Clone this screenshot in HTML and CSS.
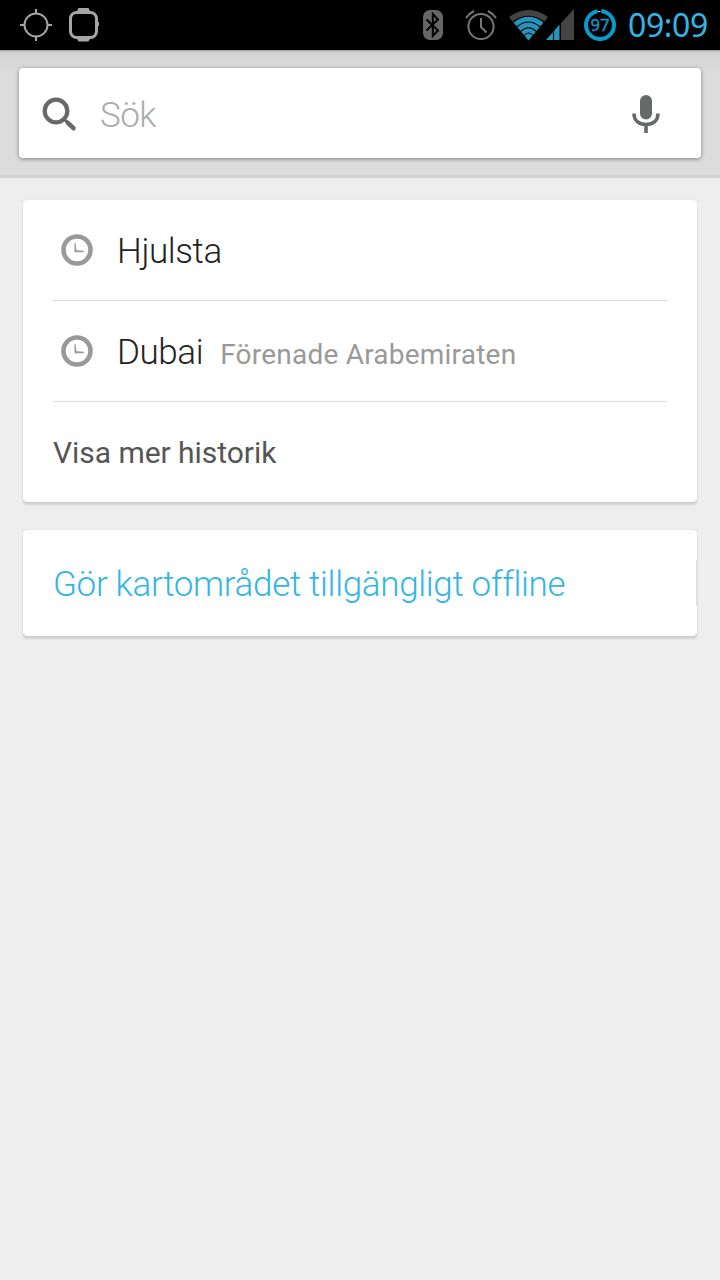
FILE: index.html
```html
<!DOCTYPE html>
<html lang="sv">
<head>
<meta charset="utf-8">
<title>Sök</title>
<link rel="stylesheet" href="styles.css">
</head>
<body>
<header class="status">
  <div class="status-left">
    <svg width="32" height="32" viewBox="0 0 32 32" fill="none" stroke="#a6a6a6" stroke-width="2"><circle cx="16" cy="16" r="11.500"/><path d="M16 0v5M16 27v5M0 16h5M27 16h5"/></svg>
    <svg width="31" height="34" viewBox="0 0 31 34"><path fill="#a6a6a6" d="M9.500 0h10l2.500 5h-15zM7 29h15l-2.500 4.500h-10zM27 14h3v4h-3z"/><rect x="1.500" y="4.500" width="26" height="25" rx="6" fill="#000" stroke="#a6a6a6" stroke-width="3"/></svg>
  </div>
  <div class="status-right">
    <svg class="bluetooth" width="20" height="30" viewBox="0 0 20 30"><rect width="20" height="30" rx="7" ry="7" fill="#666"/><path d="M3.500 9.500 15 20.500 9.800 26V4L15 9.500 3.500 20.500" fill="none" stroke="#000" stroke-width="2"/></svg>
    <svg class="alarm" width="32" height="32" viewBox="0 0 32 32" fill="none" stroke="#777" stroke-width="2"><circle cx="16" cy="17.500" r="12.600"/><path d="M16 9v9l5.500 5.500M1 9Q4 4.500 9 2M31 9Q28 4.500 23 2"/></svg>
    <svg class="wifi" width="40" height="32" viewBox="0 0 40 32"><path fill="#444" d="M0 7Q19.500-7 39 7l-3.500 4.500Q19.500 0 3.500 11.500z"/><path fill="#2794bd" d="M4.500 12.500Q19.500 1 34.500 12.500L19.500 30.500z"/><path fill="none" stroke="#000" stroke-width="1.100" d="M7.500 17Q19.500 7 31.500 17M11.500 21.500Q19.500 14 27.500 21.500M15 25.500Q19.500 20.500 24 25.500"/></svg>
    <svg class="signal" width="29" height="32" viewBox="0 0 29 32"><path fill="#444" d="M28 0v31H15V14z"/><path fill="#2794bd" d="M13.500 15.500v15.500H0z"/><path stroke="#000" stroke-width="1.200" d="M7.500 20v12"/></svg>
    <svg class="battery" width="32" height="32" viewBox="0 0 32 32"><circle cx="16" cy="16" r="14" fill="none" stroke="#079cd0" stroke-width="4"/><path d="M13 0l1 5h3l.500-5z" fill="#000"/><path d="M13.500 2.500h3" stroke="#b8c8cc"/><text x="16" y="22" class="battery-label">97</text></svg>
    <span class="clock">09:09</span>
  </div>
</header>
<div class="search-bar">
  <div class="search-box">
    <svg class="lens" width="36" height="36" viewBox="0 0 36 36" fill="none" stroke="#666967"><circle cx="14" cy="14" r="11.300" stroke-width="4.200"/><path d="M22 22l4 4" stroke-width="3"/><path d="M25.800 25.800l5.700 5.400" stroke-width="4.600" stroke-linecap="round"/></svg>
    <span class="placeholder">Sök</span>
    <svg class="mic" width="28" height="39" viewBox="0 0 28 39"><rect x="8" y="0" width="12" height="24.500" rx="6" fill="#666967"/><path d="M2 18.500c0 7 5 11 12 11s12-4 12-11M14 29v9" fill="none" stroke="#666967" stroke-width="3.600"/></svg>
  </div>
</div>
<main class="content">
  <section class="card history">
    <div class="row">
      <svg class="recent" width="32" height="32" viewBox="0 0 32 32"><circle cx="16" cy="16" r="13.500" fill="none" stroke="#999" stroke-width="4.600"/><path d="M13.500 9h1l1 7.200 7.300 .600v1.500H13.500z" fill="#999"/></svg>
      <span class="place">Hjulsta</span>
    </div>
    <div class="row">
      <svg class="recent" width="32" height="32" viewBox="0 0 32 32"><circle cx="16" cy="16" r="13.500" fill="none" stroke="#999" stroke-width="4.600"/><path d="M13.500 9h1l1 7.200 7.300 .600v1.500H13.500z" fill="#999"/></svg>
      <span class="place">Dubai</span><span class="detail">Förenade Arabemiraten</span>
    </div>
    <div class="row more"><span>Visa mer historik</span></div>
  </section>
  <section class="card offline">
    <span>Gör kartområdet tillgängligt offline</span>
    <i class="edge"></i>
  </section>
</main>
</body>
</html>
```
FILE: styles.css
```css
* { box-sizing: border-box; }
body { margin: 0; width: 720px; height: 1280px; background: #eee; font-family: Roboto, sans-serif; overflow: hidden; }
svg { display: block; flex: none; }
span { white-space: nowrap; }
.status { height: 50px; background: #000; display: flex; justify-content: space-between; }
.status-left { display: flex; gap: 17px; padding: 9px 0 0 20px; }
.status-left svg:last-child { margin-top: -1px; }
.status-right { display: flex; align-items: flex-start; width: 297px; padding-top: 9px; }
.bluetooth { margin-top: 1px; }
.alarm { margin-left: 22px; }
.wifi { margin: 1px 0 0 12px; }
.signal { margin-left: -3px; }
.battery { margin-left: 9px; }
.battery-label { fill: #1397c6; stroke: #1397c6; stroke-width: 0.4px; font-family: "Noto Sans", sans-serif; font-size: 16.5px; text-anchor: middle; }
.clock { margin: -4px 0 0 12px; color: #33b5e5; font-family: "Noto Sans", sans-serif; font-size: 32px; line-height: 40px; letter-spacing: -0.4px; }
.search-bar { height: 128px; padding: 18px 19px 0; background: linear-gradient(#999 0, #cecece 2px, #d5d5d5 6px, #dcdcdc 22px); border-bottom: 3px solid #d0d0d0; }
.search-box { height: 90px; display: flex; align-items: center; background: #fff; border-radius: 4px; box-shadow: 0 1px 4px rgba(0,0,0,.42); padding: 0 41px 0 23px; }
.lens { margin-top: 4px; }
.placeholder { color: #aaa; font-size: 35px; font-weight: 300; line-height: 46px; margin: 5px 0 0 22px; letter-spacing: -0.6px; }
.mic { margin: 3px 0 0 auto; }
.content { padding: 22px 23px; display: flex; flex-direction: column; gap: 28px; }
.card { background: #fff; border-radius: 4px; box-shadow: 0 0 1px rgba(0,0,0,.2), 0 3px 2px rgba(0,0,0,.12); }
.history { height: 302px; padding: 0 30px; }
.row { height: 101px; display: flex; align-items: center; border-bottom: 1px solid #ddd; }
.row.more { height: 100px; border: 0; color: #555; font-size: 30px; letter-spacing: -0.04px; }
.recent { margin-left: 8px; }
.place { color: #222; font-size: 35px; font-weight: 300; line-height: 42px; margin: 3px 0 0 24px; letter-spacing: -0.4px; }
.detail { color: #999; font-size: 28px; line-height: 34px; margin: 7px 0 0 17px; letter-spacing: 0.22px; }
.more span { margin-top: 1px; }
.offline { height: 106px; padding: 3px 30px 0; display: flex; align-items: center; position: relative; color: #33b5e5; font-size: 35px; font-weight: 300; letter-spacing: -0.32px; }
.edge { position: absolute; right: 0; top: 30px; width: 1px; height: 46px; background: #ddd; }
```
